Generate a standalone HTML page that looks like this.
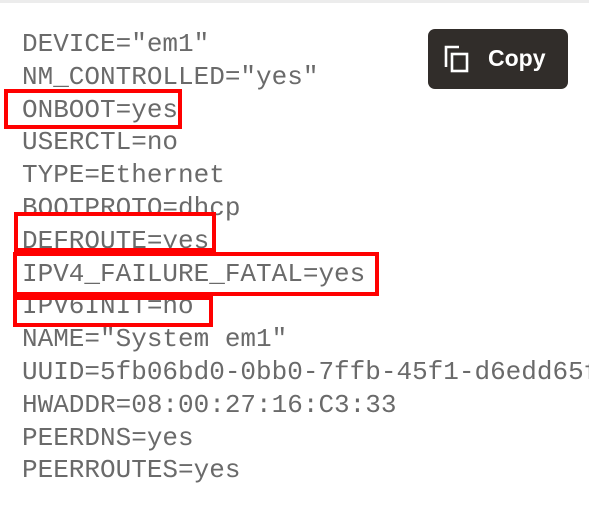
<!DOCTYPE html>
<html><head><style>
html,body{margin:0;width:589px;height:511px;overflow:hidden;background:#fff}
body{position:relative}
.top{position:absolute;left:0;top:0;width:589px;height:3px;background:#ececec}
.wrap{position:absolute;left:0;top:0;width:589px;height:511px;overflow:hidden}
pre{position:absolute;left:22px;top:28px;margin:0;font-family:"Liberation Mono",monospace;font-size:26px;line-height:32.8px;color:#6a6a6a;white-space:pre}
.box{position:absolute;border:4px solid #f00;box-sizing:border-box}
.btn{position:absolute;left:428px;top:29px;width:140px;height:60px;background:#312d2a;border-radius:7px;color:#fff;font-family:"Liberation Sans",sans-serif;font-weight:bold;font-size:23px}
.btn span{position:absolute;left:60px;top:16px}
</style></head><body>
<div class="top"></div>
<div class="wrap">
<pre>DEVICE="em1"
NM_CONTROLLED="yes"
ONBOOT=yes
USERCTL=no
TYPE=Ethernet
BOOTPROTO=dhcp
DEFROUTE=yes
IPV4_FAILURE_FATAL=yes
IPV6INIT=no
NAME="System em1"
UUID=5fb06bd0-0bb0-7ffb-45f1-d6edd65f3e03
HWADDR=08:00:27:16:C3:33
PEERDNS=yes
PEERROUTES=yes</pre>
</div>
<div class="box" style="left:4px;top:89px;width:178px;height:40px"></div>
<div class="box" style="left:14px;top:212px;width:202px;height:40px"></div>
<div class="box" style="left:13px;top:252px;width:366px;height:44px"></div>
<div class="box" style="left:13px;top:296px;width:200px;height:31px"></div>
<div class="btn">
<svg style="position:absolute;left:16px;top:16px" width="26" height="28" viewBox="0 0 26 28" fill="none" stroke="#fff" stroke-width="2.6">
<path d="M2 22V2h13"/><rect x="8" y="9" width="15" height="17"/>
</svg>
<span>Copy</span></div>
</body></html>
